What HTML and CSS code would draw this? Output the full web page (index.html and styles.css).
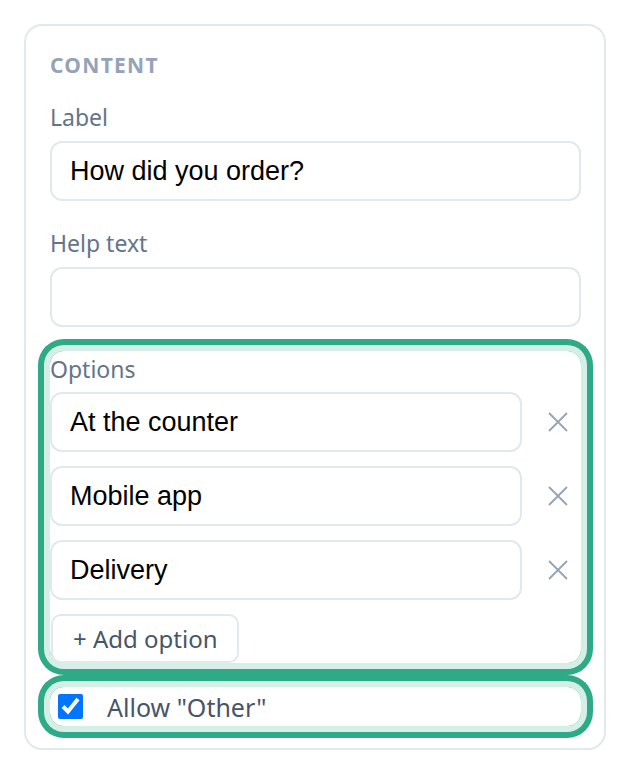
FILE: index.html
```html
<!DOCTYPE html>
<html lang="en">
<head>
<meta charset="utf-8">
<title>Content</title>
<link rel="stylesheet" href="styles.css">
</head>
<body>
<section class="card">
  <h2 class="heading">CONTENT</h2>
  <div class="field field-first">
    <label class="label" for="f-label">Label</label>
    <input class="input" id="f-label" type="text" value="How did you order?">
  </div>
  <div class="field">
    <label class="label" for="f-help">Help text</label>
    <input class="input" id="f-help" type="text" value="">
  </div>
  <div class="field options hl">
    <div class="label label-options">Options</div>
    <div class="opt-list">
      <div class="opt-row">
        <input class="input" type="text" value="At the counter">
        <button class="remove" type="button" aria-label="Remove">
          <svg viewBox="0 0 20 20" width="20" height="20"><path d="M1 1L19 19M19 1L1 19" stroke="#94a3b8" stroke-width="1.8" fill="none"/></svg>
        </button>
      </div>
      <div class="opt-row">
        <input class="input" type="text" value="Mobile app">
        <button class="remove" type="button" aria-label="Remove">
          <svg viewBox="0 0 20 20" width="20" height="20"><path d="M1 1L19 19M19 1L1 19" stroke="#94a3b8" stroke-width="1.8" fill="none"/></svg>
        </button>
      </div>
      <div class="opt-row">
        <input class="input" type="text" value="Delivery">
        <button class="remove" type="button" aria-label="Remove">
          <svg viewBox="0 0 20 20" width="20" height="20"><path d="M1 1L19 19M19 1L1 19" stroke="#94a3b8" stroke-width="1.8" fill="none"/></svg>
        </button>
      </div>
      <div class="add-wrap"><button class="add" type="button">+ Add option</button></div>
    </div>
  </div>
  <label class="check hl">
    <input class="checkbox" type="checkbox" checked>
    <span class="check-text">Allow "Other"</span>
  </label>
</section>
</body>
</html>
```

FILE: styles.css
```css
* { box-sizing: border-box; }
html, body { margin: 0; padding: 0; background: #ffffff; }
body {
  padding: 24px;
  font-family: "Noto Sans", "Open Sans", sans-serif;
}
.card {
  border: 2px solid #e2e8f0;
  border-radius: 18px;
  padding: 27px 23px 22px 24px;
  display: flex;
  flex-direction: column;
}
.heading {
  margin: 0;
  font-size: 21px;
  line-height: 24px;
  font-weight: 700;
  letter-spacing: 1.3px;
  color: #94a3b8;
}
.field {
  display: flex;
  flex-direction: column;
  gap: 8px;
  margin-top: 26px;
}
.field-first { margin-top: 24px; }
.label {
  font-size: 23px;
  line-height: 32px;
  color: #64748b;
}
.input {
  display: block;
  width: 100%;
  height: 60px;
  border: 2px solid #e2e8f0;
  border-radius: 12px;
  padding: 0 18px;
  font-family: "Liberation Sans", Arial, sans-serif;
  font-size: 27px;
  color: #000000;
  background: #ffffff;
  outline: none;
}
.hl {
  border-radius: 14px;
  box-shadow: 0 0 0 6px #d5efe6, 0 0 0 12px #2eaa87;
}
.options {
  margin-top: 24px;
  gap: 7px;
}
.label-options { margin-top: 2px; }
.opt-list {
  display: flex;
  flex-direction: column;
  gap: 14px;
}
.opt-row {
  display: flex;
  align-items: center;
}
.opt-row .input { flex: 1; width: auto; }
.remove {
  border: 0;
  background: none;
  padding: 0;
  margin: 0 13px 0 26px;
  width: 20px;
  height: 20px;
  display: flex;
}
.add-wrap { display: flex; }
.add {
  height: 49px;
  width: 188px;
  margin-left: 1px;
  border: 2px solid #e2e8f0;
  border-radius: 10px;
  background: #ffffff;
  font-family: "Noto Sans", "Open Sans", sans-serif;
  font-size: 24px;
  color: #475569;
  padding: 0 0 0 20px;
  text-align: left;
}
.check {
  margin-top: 24px;
  height: 39px;
  display: flex;
  align-items: center;
}
.checkbox {
  width: 25px;
  height: 25px;
  margin: 0 0 0 8px;
  accent-color: #0075ff;
}
.check-text {
  margin-left: 24px;
  font-size: 25px;
  color: #475569;
}
```
